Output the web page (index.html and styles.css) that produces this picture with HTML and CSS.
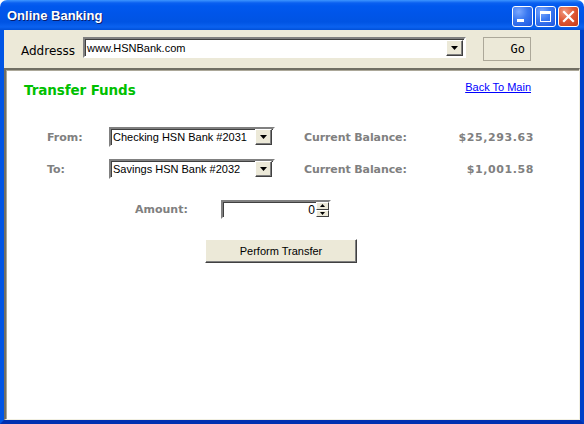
FILE: index.html
```html
<!DOCTYPE html>
<html>
<head>
<meta charset="utf-8">
<link rel="stylesheet" href="styles.css">
</head>
<body>
<div class="window">
  <div class="titlebar">
    <span class="title">Online Banking</span>
    <div class="caption-buttons">
      <span class="cbtn min"><svg width="21" height="21" viewBox="0 0 21 21"><rect x="5" y="13" width="7" height="3" fill="#fff"/></svg></span>
      <span class="cbtn max"><svg width="21" height="21" viewBox="0 0 21 21"><rect x="5.5" y="5.5" width="10" height="10" fill="none" stroke="#fff"/><rect x="5" y="5" width="11" height="3" fill="#fff"/></svg></span>
      <span class="cbtn close"><svg width="21" height="21" viewBox="0 0 21 21"><path d="M6 6 L15 15 M15 6 L6 15" stroke="#fff" stroke-width="2.2" stroke-linecap="square"/></svg></span>
    </div>
  </div>
  <div class="frame">
    <div class="addressbar">
      <span class="addr-label">Addresss</span>
      <div class="combo addr-combo">
        <span class="combo-text">www.HSNBank.com</span>
        <span class="drop"><svg width="7" height="4" viewBox="0 0 7 4"><path d="M0 0h7L3.5 4z" fill="#000"/></svg></span>
      </div>
      <button class="btn go">Go</button>
    </div>
    <div class="content">
      <div class="header">
        <h1 class="heading">Transfer Funds</h1>
        <a class="back" href="#">Back To Main</a>
      </div>
      <div class="row from">
        <span class="label lbl-acct">From:</span>
        <div class="combo acct">
          <span class="combo-text">Checking HSN Bank #2031</span>
          <span class="drop"><svg width="7" height="4" viewBox="0 0 7 4"><path d="M0 0h7L3.5 4z" fill="#000"/></svg></span>
        </div>
        <span class="label lbl-bal">Current Balance:</span>
        <span class="label amt">$25,293.63</span>
      </div>
      <div class="row to">
        <span class="label lbl-acct">To:</span>
        <div class="combo acct">
          <span class="combo-text">Savings HSN Bank #2032</span>
          <span class="drop"><svg width="7" height="4" viewBox="0 0 7 4"><path d="M0 0h7L3.5 4z" fill="#000"/></svg></span>
        </div>
        <span class="label lbl-bal">Current Balance:</span>
        <span class="label amt">$1,001.58</span>
      </div>
      <div class="row amount-row">
        <span class="label lbl-amount">Amount:</span>
        <div class="spin">
          <span class="spin-text">0</span>
          <span class="spin-btns">
            <span class="sb"><svg width="5" height="3" viewBox="0 0 5 3"><path d="M0 3h5L2.5 0z" fill="#000"/></svg></span>
            <span class="sb"><svg width="5" height="3" viewBox="0 0 5 3"><path d="M0 0h5L2.5 3z" fill="#000"/></svg></span>
          </span>
        </div>
      </div>
      <div class="row btn-row">
        <button class="btn perform">Perform Transfer</button>
      </div>
    </div>
  </div>
</div>
</body>
</html>
```

FILE: styles.css
```css
* { box-sizing: border-box; }
html, body { margin: 0; padding: 0; }
body { width: 584px; height: 424px; overflow: hidden; background: #fff; font-family: "DejaVu Sans", "Liberation Sans", sans-serif; }

.window { width: 584px; height: 424px; display: flex; flex-direction: column; }

.titlebar {
  height: 30px;
  flex: none;
  display: flex;
  align-items: center;
  justify-content: space-between;
  padding: 0 5px 0 7px;
  border-radius: 7px 7px 0 0;
  background: linear-gradient(to bottom, #3d95ff 0px, #0a5ff0 3px, #0058ee 6px, #0055e9 14px, #0054e3 22px, #0b62f0 27px, #0050d8 30px);
}
.title {
  color: #fff;
  font-family: "Liberation Sans", sans-serif;
  font-weight: bold;
  font-size: 13px;
  text-shadow: 1px 1px 0 #0a1e6e;
  margin-top: 1px;
}
.caption-buttons { display: flex; gap: 2px; margin-top: 2px; }
.cbtn {
  width: 21px; height: 21px;
  border: 1px solid #fff;
  border-radius: 3px;
  display: block;
  position: relative;
  overflow: hidden;
}
.cbtn svg { position: absolute; left: -1px; top: -1px; }
.min, .max { background: radial-gradient(circle at 30% 25%, #7ba8ff 0, #3a78f0 45%, #1c55e0 100%); }
.close { background: radial-gradient(circle at 30% 25%, #f09a80 0, #e05a36 45%, #c53a18 100%); }

.frame {
  flex: 1;
  display: flex;
  flex-direction: column;
  background: #ece9d8;
  border-left: 4px solid #0055e5;
  border-right: 4px solid #0040c8;
  border-bottom: 4px solid #0030b0;
}

.addressbar {
  height: 38px;
  flex: none;
  display: flex;
  align-items: flex-start;
  padding-top: 7px;
}
.addr-label { font-size: 12px; color: #000; margin: 7px 0 0 17px; width: 62px; font-family: "DejaVu Sans", sans-serif; }
.combo {
  display: flex;
  align-items: center;
  background: #fff;
  border: 2px solid;
  border-color: #808080 #fff #fff #808080;
  box-shadow: inset 1px 1px 0 #404040;
  height: 21px;
  padding: 0 1px 0 2px;
}
.combo-text { flex: 1; color: #000; white-space: nowrap; font-family: "Liberation Sans", sans-serif; font-size: 11px; }
.drop {
  width: 17px; height: 16px;
  background: #ece9d8;
  border: 1px solid;
  border-color: #fff #404040 #404040 #fff;
  box-shadow: inset -1px -1px 0 #808080;
  display: flex; align-items: center; justify-content: center;
}
.addr-combo { width: 383px; margin-left: 0; }
.btn {
  font-family: "Liberation Sans", sans-serif;
  font-size: 11px;
  color: #000;
  background: #ece9d8;
  border: 1px solid #aca899;
  padding: 0;
}
.go { width: 48px; height: 24px; margin-left: 17px; text-align: right; padding-right: 5px; font-family: "DejaVu Sans Mono", monospace; font-size: 12px; }

.content {
  flex: 1;
  background: #fff;
  border-top: 2px solid #716f64;
  border-left: 2px solid #716f64;
  border-right: 1px solid #f1efe2;
  border-bottom: 1px solid #f1efe2;
  box-shadow: inset 1px 1px 0 #aca899;
}
.header { display: flex; justify-content: space-between; align-items: flex-start; padding: 9px 48px 0 18px; height: 57px; }
.heading { margin: 3px 0 0; font-size: 13.5px; font-weight: bold; color: #00c000; font-family: "DejaVu Sans", sans-serif; letter-spacing: -0.1px; }
.back { color: #0000ff; font-family: "Liberation Sans", sans-serif; font-size: 11px; margin-top: 2px; }

.row { display: flex; align-items: center; }
.label { font-family: "DejaVu Sans", sans-serif; font-weight: bold; font-size: 11px; color: #808080; }
.from { height: 20px; }
.to { height: 20px; margin-top: 12px; }
.lbl-acct { width: 62px; margin-left: 41px; }
.acct { width: 166px; height: 20px; }
.lbl-bal { margin-left: 29px; width: 110px; letter-spacing: -0.1px; }
.amt { width: 120px; text-align: right; letter-spacing: 0.6px; }

.amount-row { height: 19px; margin-top: 21px; }
.lbl-amount { margin-left: 129px; width: 86px; }
.spin {
  width: 110px; height: 19px;
  display: flex; align-items: center;
  background: #fff;
  border: 2px solid;
  border-color: #808080 #fff #fff #808080;
  box-shadow: inset 1px 1px 0 #404040;
}
.spin-text { flex: 1; text-align: right; font-family: "Liberation Sans", sans-serif; font-size: 12px; padding-right: 1px; }
.spin-btns { display: flex; flex-direction: column; width: 13px; height: 15px; }
.sb {
  flex: 1; background: #ece9d8;
  border: 1px solid; border-color: #fff #404040 #404040 #fff;
  display: flex; align-items: center; justify-content: center;
}

.btn-row { margin-top: 20px; }
.perform {
  margin-left: 199px; width: 152px; height: 24px;
  border: 1px solid; border-color: #fff #404040 #404040 #fff;
  box-shadow: inset -1px -1px 0 #808080;
  font-size: 11px;
}
```
